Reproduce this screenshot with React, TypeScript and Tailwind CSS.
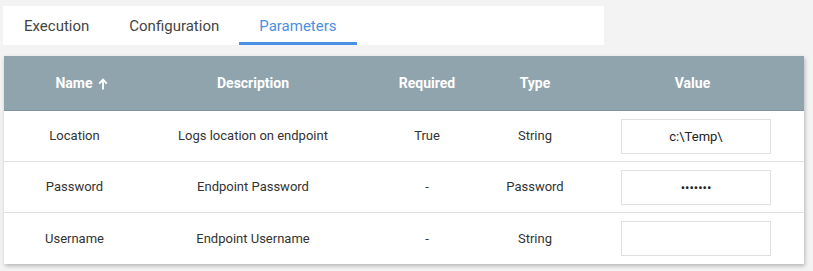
import { useState } from 'react';

type Param = {
  name: string;
  description: string;
  required: string;
  type: string;
  value: string;
  secret?: boolean;
};

const params: Param[] = [
  { name: 'Location', description: 'Logs location on endpoint', required: 'True', type: 'String', value: 'c:\\Temp\\' },
  { name: 'Password', description: 'Endpoint Password', required: '-', type: 'Password', value: 'secret1', secret: true },
  { name: 'Username', description: 'Endpoint Username', required: '-', type: 'String', value: '' },
];

const tabs = ['Execution', 'Configuration', 'Parameters'];

const cols = 'grid grid-cols-[141px_216px_132px_84px_1fr] items-center text-center';

function SortArrow() {
  return (
    <svg width="10" height="12" viewBox="0 0 10 12" className="ml-[5px] inline-block" aria-hidden>
      <path d="M5 11.5V2" stroke="white" strokeWidth="1.8" fill="none" />
      <path d="M1.2 5.6L5 1.6l3.8 4" stroke="white" strokeWidth="1.8" fill="none" />
    </svg>
  );
}

export default function App() {
  const [active, setActive] = useState('Parameters');
  const [values, setValues] = useState(params.map((p) => p.value));

  return (
    <div
      className="min-h-[271px] w-[813px] bg-[#f3f3f3] pl-[3px] pt-[6px]"
      style={{ fontFamily: 'Roboto, "Liberation Sans", sans-serif' }}
    >
      <div className="flex h-[39px] w-[601px] bg-white pl-[1px]">
        {tabs.map((t) => (
          <button
            key={t}
            onClick={() => setActive(t)}
            className={
              'relative h-full px-[20px] pt-[1px] text-[15px] ' +
              (active === t ? 'text-[#4a90e2]' : 'text-[#444]')
            }
          >
            {t}
            {active === t && <span className="absolute bottom-0 left-0 right-0 h-[3px] bg-[#4a90e2]" />}
          </button>
        ))}
      </div>

      <div className="ml-[1px] mt-[11px] w-[800px] bg-white shadow-[1px_2px_4px_rgba(0,0,0,0.25)]">
        <div className={cols + ' h-[55px] border-b border-[#7f939b] bg-[#90a4ae] pt-[1px] text-[14px] font-bold text-white'}>
          <div className="flex items-center justify-center pl-[14px]">
            Name
            <SortArrow />
          </div>
          <div>Description</div>
          <div>Required</div>
          <div>Type</div>
          <div className="pl-[4px]">Value</div>
        </div>

        {params.map((p, i) => (
          <div
            key={p.name}
            className={cols + ' h-[51px] text-[13px] text-[#333] ' + (i < params.length - 1 ? 'border-b border-[#e0e0e0]' : '')}
          >
            <div>{p.name}</div>
            <div>{p.description}</div>
            <div>{p.required}</div>
            <div>{p.type}</div>
            <div className="flex pl-[44px]">
              <input
                type={p.secret ? 'password' : 'text'}
                value={values[i]}
                onChange={(e) => setValues(values.map((v, j) => (j === i ? e.target.value : v)))}
                className="h-[35px] w-[150px] border border-[#e0e0e0] bg-white text-center text-[13px] text-[#222] outline-none"
              />
            </div>
          </div>
        ))}
      </div>
    </div>
  );
}
